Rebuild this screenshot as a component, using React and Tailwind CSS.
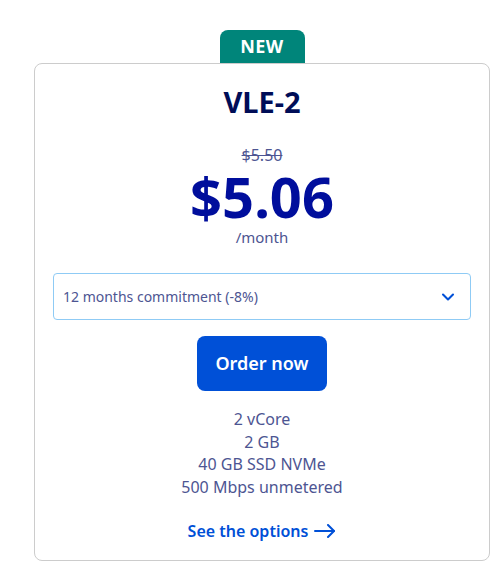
import { ChevronDown } from "lucide-react";

export default function App() {
  const specs = ["2 vCore", "2 GB", "40 GB SSD NVMe", "500 Mbps unmetered"];

  return (
    <div
      className="w-[497px] h-[579px] bg-white pt-[30px] pl-[34px]"
      style={{ fontFamily: '"Source Sans Pro", "Noto Sans", sans-serif' }}
    >
      <div className="w-[456px] flex flex-col items-center">
        <div className="w-[85px] h-[33px] bg-[#00857a] rounded-t-[8px] flex items-center justify-center text-white font-bold text-[18px] tracking-wide">
          NEW
        </div>
        <div className="w-full h-[498px] border border-[#cccccc] rounded-[8px] flex flex-col items-center pt-[20px]">
          <h2 className="text-[29px] font-bold text-[#000d57] leading-[36px]">VLE-2</h2>

          <p className="mt-[25px] text-[16px] leading-[20px] text-[#4d5592] line-through">$5.50</p>
          <p className="mt-[2px] text-[56px] leading-[58px] font-bold text-[#000e9c]">$5.06</p>
          <p className="mt-[2px] text-[15px] leading-[20px] text-[#4d5592]">/month</p>

          <div className="mt-[26px] w-[418px] h-[47px] border border-[#8fcbf5] rounded-[4px] flex items-center justify-between pl-[9px] pr-[12px]">
            <span className="text-[14px] text-[#4d5592]">12 months commitment (-8%)</span>
            <ChevronDown className="w-[20px] h-[20px] text-[#0050d7]" strokeWidth={2.5} />
          </div>

          <button className="mt-[16px] w-[130px] h-[55px] bg-[#0050d7] rounded-[8px] text-white text-[18px] font-semibold">
            Order now
          </button>

          <div className="mt-[17px] flex flex-col items-center text-[16px] leading-[22.5px] text-[#4d5592]">
            {specs.map((s, i) => (
              <span key={i}>{s}</span>
            ))}
          </div>

          <a className="mt-[21px] flex items-center gap-[6px] text-[16px] font-semibold text-[#0050d7]">
            See the options
            <svg width="22" height="14" viewBox="0 0 22 14" fill="none" stroke="currentColor" strokeWidth="2" strokeLinecap="round" strokeLinejoin="round">
              <path d="M1 7h19" />
              <path d="M14 1l6 6-6 6" />
            </svg>
          </a>
        </div>
      </div>
    </div>
  );
}
